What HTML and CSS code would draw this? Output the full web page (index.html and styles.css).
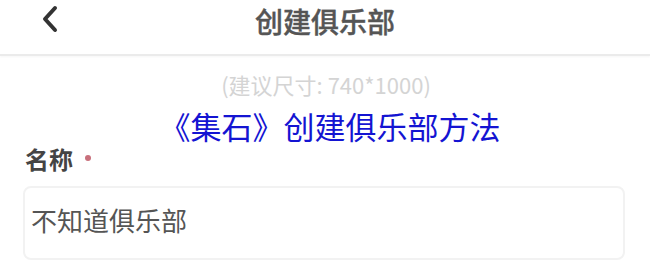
FILE: index.html
```html
<!DOCTYPE html>
<html lang="zh">
<head>
<meta charset="utf-8">
<link rel="stylesheet" href="styles.css">
</head>
<body>
<div class="page">
  <header class="nav">
    <svg class="back" width="22" height="30" viewBox="0 0 22 30"><path d="M16 4 L6 15 L16 26" fill="none" stroke="#333" stroke-width="4" stroke-linecap="round" stroke-linejoin="round"/></svg>
    <div class="nav-title">创建俱乐部</div>
  </header>
  <div class="hint">(建议尺寸: 740*1000)</div>
  <div class="headline">《集石》创建俱乐部方法</div>
  <div class="label">名称<span class="req"></span></div>
  <div class="input">不知道俱乐部</div>
</div>
</body>
</html>
```
FILE: styles.css
```css
html, body {
  margin: 0;
  padding: 0;
  background: #fff;
}
.page {
  width: 650px;
  height: 260px;
  overflow: hidden;
  font-family: "Noto Sans CJK SC", "Noto Sans", sans-serif;
}
.nav {
  height: 54px;
  border-bottom: 2px solid #ebebeb;
  display: flex;
  justify-content: center;
  position: relative;
  box-shadow: 0 1px 2px rgba(0,0,0,0.04);
}
.back {
  position: absolute;
  left: 39px;
  top: 4px;
}
.nav-title {
  font-size: 28px;
  font-weight: 500;
  color: #555;
  line-height: 40px;
  margin-top: 1px;
  -webkit-text-stroke: 0.4px #555;
}
.hint {
  text-align: center;
  font-size: 22px;
  color: #d4d4d4;
  line-height: 28px;
  margin-top: 14px;
  padding-left: 2px;
}
.headline {
  text-align: center;
  font-size: 31px;
  color: #1414d2;
  line-height: 40px;
  margin-top: 8px;
  padding-left: 10px;
}
.label {
  font-size: 24px;
  font-weight: 700;
  color: #444;
  line-height: 30px;
  margin-left: 25px;
  margin-top: -2px;
  display: flex;
  align-items: center;
}
.req {
  width: 6px;
  height: 6px;
  border-radius: 50%;
  background: #c8707c;
  margin-left: 12px;
  margin-top: -2px;
}
.input {
  margin: 12px 25px 0 23px;
  height: 74px;
  border: 2px solid #f2f2f2;
  border-radius: 8px;
  box-sizing: border-box;
  padding: 0 0 8px 6px;
  display: flex;
  align-items: center;
  font-size: 26px;
  color: #555;
}
```
